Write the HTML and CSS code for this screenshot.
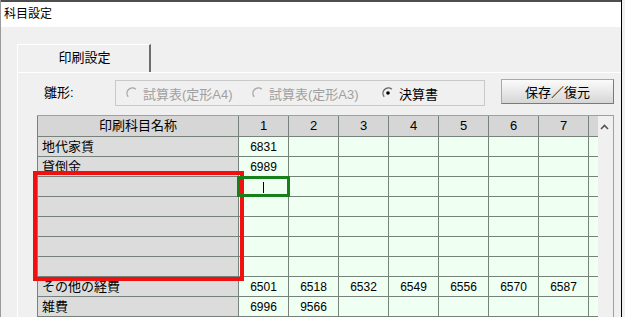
FILE: index.html
```
<!DOCTYPE html>
<html lang="ja">
<head>
    <meta charset="UTF-8">
    <title>科目設定</title>
    <link rel="stylesheet" href="styles.css">
</head>
<body>
<div class="window">
    <div class="titlebar">科目設定</div>

    <div class="tabs">
        <div class="tab">印刷設定</div>
        <div class="tab-rest"></div>
    </div>

    <div class="panel">
        <div class="options">
            <span class="label">雛形:</span>
            <div class="group">
                <span class="radio disabled r1">
                    <svg width="12" height="12" viewBox="0 0 12 12"><path d="M2.2 9.8 A5.4 5.4 0 0 1 9.8 2.2" fill="none" stroke="#a8a8a8" stroke-width="1.4"/></svg>
                    試算表(定形A4)
                </span>
                <span class="radio disabled r2">
                    <svg width="12" height="12" viewBox="0 0 12 12"><path d="M2.2 9.8 A5.4 5.4 0 0 1 9.8 2.2" fill="none" stroke="#a8a8a8" stroke-width="1.4"/></svg>
                    試算表(定形A3)
                </span>
                <span class="radio">
                    <svg width="12" height="12" viewBox="0 0 12 12"><path d="M2.2 9.8 A5.4 5.4 0 0 1 9.8 2.2" fill="none" stroke="#6a6a6a" stroke-width="1.4"/><circle cx="6" cy="6" r="1.8" fill="#000"/></svg>
                    決算書
                </span>
            </div>
            <button class="btn">保存／復元</button>
        </div>

        <div class="gridbox">
            <table class="grid">
                <colgroup>
                    <col class="c-name">
                    <col class="c-num"><col class="c-num"><col class="c-num"><col class="c-num">
                    <col class="c-num"><col class="c-num"><col class="c-num">
                    <col class="c-rest">
                </colgroup>
                <thead>
                <tr><th>印刷科目名称</th><th>1</th><th>2</th><th>3</th><th>4</th><th>5</th><th>6</th><th>7</th><th></th></tr>
                </thead>
                <tbody>
                <tr><td class="name">地代家賃</td><td>6831</td><td></td><td></td><td></td><td></td><td></td><td></td><td></td></tr>
                <tr><td class="name">貸倒金</td><td>6989</td><td></td><td></td><td></td><td></td><td></td><td></td><td></td></tr>
                <tr><td class="name"></td><td></td><td></td><td></td><td></td><td></td><td></td><td></td><td></td></tr>
                <tr><td class="name"></td><td></td><td></td><td></td><td></td><td></td><td></td><td></td><td></td></tr>
                <tr><td class="name"></td><td></td><td></td><td></td><td></td><td></td><td></td><td></td><td></td></tr>
                <tr><td class="name"></td><td></td><td></td><td></td><td></td><td></td><td></td><td></td><td></td></tr>
                <tr><td class="name"></td><td></td><td></td><td></td><td></td><td></td><td></td><td></td><td></td></tr>
                <tr><td class="name">その他の経費</td><td>6501</td><td>6518</td><td>6532</td><td>6549</td><td>6556</td><td>6570</td><td>6587</td><td></td></tr>
                <tr><td class="name">雑費</td><td>6996</td><td>9566</td><td></td><td></td><td></td><td></td><td></td><td></td></tr>
                </tbody>
            </table>
            <div class="scrollbar">
                <svg width="9" height="6" viewBox="0 0 9 6"><path d="M1 5 L4.5 1.5 L8 5" fill="none" stroke="#555" stroke-width="1.6"/></svg>
            </div>
        </div>
    </div>

    <!-- 注目枠 -->
    <div class="mark-red"></div>
    <div class="mark-edit"><span class="caret"></span></div>
</div>
</body>
</html>
```

FILE: styles.css
```
*{
    margin: 0;
    padding: 0;
    box-sizing: border-box;
}
body{
    width: 625px;
    height: 317px;
    overflow: hidden;
    background-color: #f0f0f0;
    font-family: "Liberation Sans", "Noto Sans CJK JP", sans-serif;
    font-size: 13px;
    color: #000;
}
.window{
    position: relative;
    width: 622px;
    height: 317px;
    border-right: 1px solid #000;
    border-left: 1px solid #9a9a9a;
    background-color: #f0f0f0;
    overflow: hidden;
}
.titlebar{
    height: 27px;
    border-top: 2px solid #4e4e4e;
    background-color: #fff;
    padding-left: 3px;
    font-size: 12px;
    line-height: 24px;
}

/* タブ */
.tabs{
    display: flex;
    padding-top: 17px;
    padding-left: 16px;
}
.tab{
    width: 134px;
    height: 28px;
    border-top: 1px solid #fff;
    border-left: 1px solid #fff;
    border-right: 2px solid #6d6d6d;
    text-align: center;
    line-height: 26px;
    padding-left: 2px;
}
.tab-rest{
    flex: 1;
}
.panel{
    margin-left: 16px;
    border-top: 1px solid #fff;
    border-left: 1px solid #fff;
    padding-top: 7px;
    padding-left: 19px;
}

/* 雛形 */
.options{
    display: flex;
    align-items: flex-start;
    height: 35px;
}
.label{
    width: 78px;
    padding-left: 7px;
    line-height: 26px;
}
.group{
    display: flex;
    align-items: center;
    width: 370px;
    height: 26px;
    border: 1px solid #c9c9c9;
    padding-left: 10px;
}
.radio{
    display: flex;
    align-items: center;
    gap: 5px;
}
.radio svg{
    flex: none;
}
.r1{
    width: 126px;
}
.r2{
    width: 130px;
}
.disabled{
    color: #a0a0a0;
}
.btn{
    margin-top: -1px;
    margin-left: 16px;
    width: 113px;
    height: 25px;
    font: inherit;
    border: 1px solid #a9a9a9;
    border-right-color: #7a7a7a;
    border-bottom-color: #7a7a7a;
    background: linear-gradient(#fbfbfb, #e9e9e9 50%, #d6d6d6);
}

/* 一覧 */
.gridbox{
    display: flex;
    align-items: flex-start;
    width: 577px;
    height: 210px;
    border-right: 1px solid #a0a0a0;
    border-top: 1px solid #a0a0a0;
    overflow: hidden;
}
.grid{
    border-collapse: collapse;
    table-layout: fixed;
    width: 560px;
    flex: none;
    margin-top: -1px;
}
.c-name{
    width: 201px;
}
.c-num{
    width: 50px;
}
.c-rest{
    width: 9px;
}
.grid th,
.grid td{
    border: 1px solid #76827a;
    height: 20px;
    padding: 0;
    line-height: 16px;
    text-align: center;
    font-weight: normal;
    white-space: nowrap;
    overflow: hidden;
}
.grid th{
    height: 21px;
    background-color: #d6d6d6;
}
.grid td{
    background-color: #effff2;
    font-size: 12px;
}
.grid td.name{
    background-color: #dcdcdc;
    text-align: left;
    padding-left: 4px;
    font-size: 13px;
}
.grid tr > :last-child{
    border-right: none;
}
.scrollbar{
    flex: 1;
    align-self: stretch;
    display: flex;
    justify-content: center;
    padding-top: 8px;
    padding-right: 1px;
    background-color: #f0f0f0;
}

/* 枠 */
.mark-red{
    position: absolute;
    left: 32px;
    top: 171px;
    width: 211px;
    height: 110px;
    border: 4px solid #f01010;
}
.mark-edit{
    position: absolute;
    left: 236px;
    top: 176px;
    width: 53px;
    height: 21px;
    border: 3px solid #16801a;
}
.caret{
    position: absolute;
    left: 23px;
    top: 3px;
    width: 1px;
    height: 11px;
    background-color: #000;
}
```
